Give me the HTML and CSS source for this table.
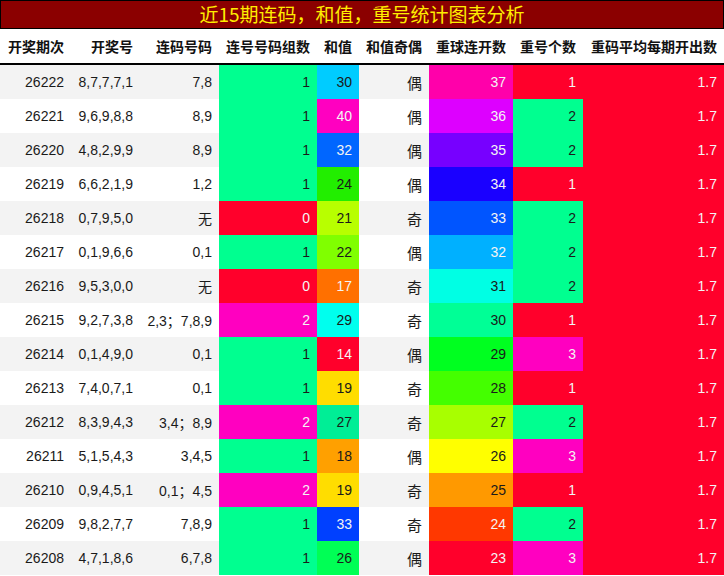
FILE: index.html
```html
<!DOCTYPE html>
<html lang="zh-CN">
<head>
<meta charset="utf-8">
<title>近15期连码，和值，重号统计图表分析</title>
<link rel="stylesheet" href="styles.css">
</head>
<body>
<div class="title">近15期连码，和值，重号统计图表分析</div>
<table class="stats">
<colgroup>
<col class="w1"><col class="w2"><col class="w3"><col class="w4"><col class="w5"><col class="w6"><col class="w7"><col class="w8"><col class="w9">
</colgroup>
<thead>
<tr><th>开奖期次</th><th>开奖号</th><th>连码号码</th><th>连号号码组数</th><th>和值</th><th>和值奇偶</th><th>重球连开数</th><th>重号个数</th><th>重码平均每期开出数</th></tr>
</thead>
<tbody>
<tr><td>26222</td><td>8,7,7,7,1</td><td>7,8</td><td class="green">1</td><td class="cyan">30</td><td>偶</td><td class="k37 lt">37</td><td class="red lt">1</td><td class="red lt">1.7</td></tr>
<tr><td>26221</td><td>9,6,9,8,8</td><td>8,9</td><td class="green">1</td><td class="mag lt">40</td><td>偶</td><td class="k36 lt">36</td><td class="green">2</td><td class="red lt">1.7</td></tr>
<tr><td>26220</td><td>4,8,2,9,9</td><td>8,9</td><td class="green">1</td><td class="s32 lt">32</td><td>偶</td><td class="k35 lt">35</td><td class="green">2</td><td class="red lt">1.7</td></tr>
<tr><td>26219</td><td>6,6,2,1,9</td><td>1,2</td><td class="green">1</td><td class="s24">24</td><td>偶</td><td class="k34 lt">34</td><td class="red lt">1</td><td class="red lt">1.7</td></tr>
<tr><td>26218</td><td>0,7,9,5,0</td><td>无</td><td class="red lt">0</td><td class="s21">21</td><td>奇</td><td class="k33 lt">33</td><td class="green">2</td><td class="red lt">1.7</td></tr>
<tr><td>26217</td><td>0,1,9,6,6</td><td>0,1</td><td class="green">1</td><td class="s22">22</td><td>偶</td><td class="k32 lt">32</td><td class="green">2</td><td class="red lt">1.7</td></tr>
<tr><td>26216</td><td>9,5,3,0,0</td><td>无</td><td class="red lt">0</td><td class="s17 lt">17</td><td>奇</td><td class="k31">31</td><td class="green">2</td><td class="red lt">1.7</td></tr>
<tr><td>26215</td><td>9,2,7,3,8</td><td>2,3；7,8,9</td><td class="mag lt">2</td><td class="s29">29</td><td>奇</td><td class="k30">30</td><td class="red lt">1</td><td class="red lt">1.7</td></tr>
<tr><td>26214</td><td>0,1,4,9,0</td><td>0,1</td><td class="green">1</td><td class="red lt">14</td><td>偶</td><td class="k29">29</td><td class="mag lt">3</td><td class="red lt">1.7</td></tr>
<tr><td>26213</td><td>7,4,0,7,1</td><td>0,1</td><td class="green">1</td><td class="s19">19</td><td>奇</td><td class="k28">28</td><td class="red lt">1</td><td class="red lt">1.7</td></tr>
<tr><td>26212</td><td>8,3,9,4,3</td><td>3,4；8,9</td><td class="mag lt">2</td><td class="s27">27</td><td>奇</td><td class="k27">27</td><td class="green">2</td><td class="red lt">1.7</td></tr>
<tr><td>26211</td><td>5,1,5,4,3</td><td>3,4,5</td><td class="green">1</td><td class="s18">18</td><td>偶</td><td class="k26">26</td><td class="mag lt">3</td><td class="red lt">1.7</td></tr>
<tr><td>26210</td><td>0,9,4,5,1</td><td>0,1；4,5</td><td class="mag lt">2</td><td class="s19">19</td><td>奇</td><td class="k25">25</td><td class="red lt">1</td><td class="red lt">1.7</td></tr>
<tr><td>26209</td><td>9,8,2,7,7</td><td>7,8,9</td><td class="green">1</td><td class="s33 lt">33</td><td>奇</td><td class="k24 lt">24</td><td class="green">2</td><td class="red lt">1.7</td></tr>
<tr><td>26208</td><td>4,7,1,8,6</td><td>6,7,8</td><td class="green">1</td><td class="s26">26</td><td>偶</td><td class="red lt">23</td><td class="mag lt">3</td><td class="red lt">1.7</td></tr>
</tbody>
</table>
</body>
</html>
```
FILE: styles.css
```css
html, body {
  margin: 0;
  padding: 0;
  background: #ffffff;
}
body {
  width: 724px;
  font-family: "Liberation Sans", "Noto Sans CJK SC", Arial, sans-serif;
  font-size: 14px;
  color: #1a1a1a;
}
.title {
  box-sizing: border-box;
  height: 29px;
  background: #8b0000;
  border: 1px solid #000;
  color: #ffee00;
  font-family: "Noto Sans CJK SC", sans-serif;
  font-size: 19px;
  line-height: 26px;
  text-align: center;
}
.stats {
  width: 724px;
  table-layout: fixed;
  border-collapse: collapse;
  border-spacing: 0;
}
.w1 { width: 71px; }
.w2 { width: 69px; }
.w3 { width: 79px; }
.w4 { width: 98px; }
.w5 { width: 42px; }
.w6 { width: 70px; }
.w7 { width: 84px; }
.w8 { width: 70px; }
.w9 { width: 141px; }
.stats th {
  height: 34px;
  padding: 0 7px 0 0;
  text-align: right;
  font-family: "Noto Sans CJK SC", sans-serif;
  font-weight: bold;
  font-size: 14px;
  color: #111;
  white-space: nowrap;
  border-bottom: 2px solid #000;
}
.stats td {
  height: 34px;
  padding: 0 7px 0 0;
  text-align: right;
  white-space: nowrap;
  overflow: hidden;
}
.stats td:nth-child(6) {
  font-family: "Noto Sans CJK SC", sans-serif;
  font-size: 15px;
}
.stats tbody tr:nth-child(odd) { background: #f3f3f3; }
.stats tbody tr:nth-child(even) { background: #ffffff; }
.lt { color: #f4f4f4; }

.green { background: #00ff90; }
.red { background: #ff002b; }
.mag { background: #ff00c0; }
.cyan { background: #00ccff; }

.s32 { background: #0066ff; }
.s24 { background: #22ee00; }
.s21 { background: #b8ff00; }
.s22 { background: #80ff00; }
.s17 { background: #ff7000; }
.s29 { background: #00ffee; }
.s19 { background: #ffdd00; }
.s27 { background: #00ee96; }
.s18 { background: #ffa000; }
.s33 { background: #0040ff; }
.s26 { background: #00ff55; }

.k37 { background: #ff00aa; }
.k36 { background: #dd00ff; }
.k35 { background: #7700ff; }
.k34 { background: #1a00ff; }
.k33 { background: #0055ff; }
.k32 { background: #00b0ff; }
.k31 { background: #00ffe4; }
.k30 { background: #00ff96; }
.k29 { background: #00ff20; }
.k28 { background: #44ff00; }
.k27 { background: #a8ff00; }
.k26 { background: #ffff00; }
.k25 { background: #ff9900; }
.k24 { background: #ff3800; }
```
